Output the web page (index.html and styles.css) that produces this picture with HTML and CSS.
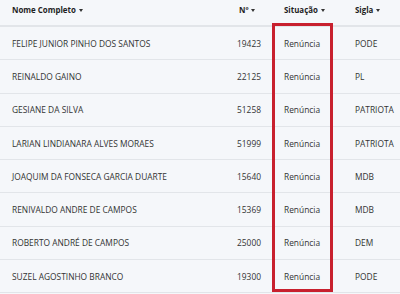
FILE: index.html
```html
<!DOCTYPE html>
<html lang="pt">
<head>
<meta charset="utf-8">
<link rel="stylesheet" href="styles.css">
</head>
<body>
<div class="wrap">
<table class="tbl">
  <colgroup>
    <col class="c-nome"><col class="c-num"><col class="c-sit"><col class="c-sig">
  </colgroup>
  <thead>
    <tr>
      <th class="nome">Nome Completo<span class="caret"></span></th>
      <th class="num">Nº<span class="caret"></span></th>
      <th class="sit">Situação<span class="caret"></span></th>
      <th class="sig">Sigla<span class="caret"></span></th>
    </tr>
  </thead>
  <tbody>
    <tr><td class="nome">FELIPE JUNIOR PINHO DOS SANTOS</td><td class="num">19423</td><td class="sit">Renúncia</td><td class="sig">PODE</td></tr>
    <tr><td class="nome">REINALDO GAINO</td><td class="num">22125</td><td class="sit">Renúncia</td><td class="sig">PL</td></tr>
    <tr><td class="nome">GESIANE DA SILVA</td><td class="num">51258</td><td class="sit">Renúncia</td><td class="sig">PATRIOTA</td></tr>
    <tr><td class="nome">LARIAN LINDIANARA ALVES MORAES</td><td class="num">51999</td><td class="sit">Renúncia</td><td class="sig">PATRIOTA</td></tr>
    <tr><td class="nome">JOAQUIM DA FONSECA GARCIA DUARTE</td><td class="num">15640</td><td class="sit">Renúncia</td><td class="sig">MDB</td></tr>
    <tr><td class="nome">RENIVALDO ANDRE DE CAMPOS</td><td class="num">15369</td><td class="sit">Renúncia</td><td class="sig">MDB</td></tr>
    <tr><td class="nome">ROBERTO ANDRÉ DE CAMPOS</td><td class="num">25000</td><td class="sit">Renúncia</td><td class="sig">DEM</td></tr>
    <tr><td class="nome">SUZEL AGOSTINHO BRANCO</td><td class="num">19300</td><td class="sit">Renúncia</td><td class="sig">PODE</td></tr>
  </tbody>
</table>
<div class="highlight"></div>
</div>
</body>
</html>
```

FILE: styles.css
```css
html, body {
  margin: 0;
  padding: 0;
  background: #f5f7fa;
}
body {
  font-family: "Open Sans", "DejaVu Sans", sans-serif;
  font-size: 8.4px;
  color: #333;
}
.wrap {
  position: relative;
  width: 400px;
  height: 294px;
  overflow: hidden;
}
.tbl {
  width: 400px;
  border-collapse: collapse;
  table-layout: fixed;
}
.c-nome { width: 222px; }
.c-num { width: 50px; }
.c-sit { width: 73px; }
.c-sig { width: 55px; }
th {
  height: 20px;
  font-weight: 700;
  font-size: 7.9px;
  color: #1f1f1f;
  text-align: left;
  padding: 0 0 5px 0;
  border-bottom: 2px solid #e2e5e9;
  vertical-align: middle;
}
td {
  height: 32.3px;
  padding: 0;
  border-bottom: 1px solid #e2e5e9;
  vertical-align: middle;
}
th.nome, td.nome { padding-left: 12px; }
th.num { padding-left: 17px; }
td.num { text-align: right; padding-right: 11px; }
th.sit, td.sit { padding-left: 12px; }
th.sig, td.sig { padding-left: 10px; }
.caret {
  display: inline-block;
  width: 0;
  height: 0;
  margin-left: 3px;
  vertical-align: middle;
  border-left: 2.5px solid transparent;
  border-right: 2.5px solid transparent;
  border-top: 3px solid #333;
}
.highlight {
  position: absolute;
  left: 272px;
  top: 23px;
  width: 55px;
  height: 263px;
  border: 3px solid #c8202e;
}
```
